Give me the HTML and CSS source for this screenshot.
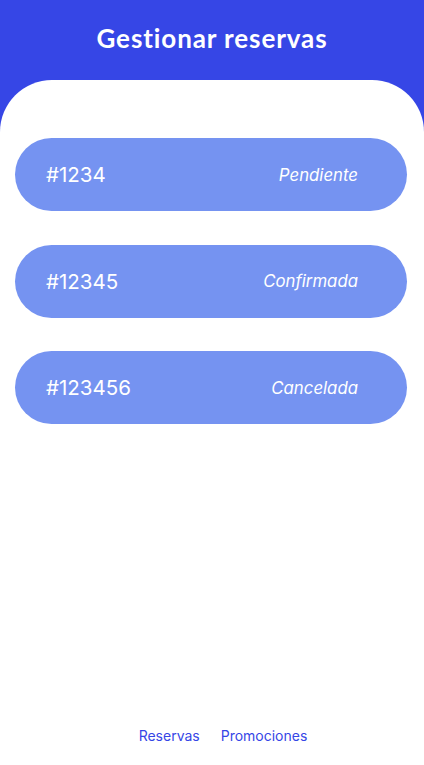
FILE: index.html
```html
<!DOCTYPE html>
<html lang="es">
<head>
<meta charset="utf-8">
<link rel="stylesheet" href="styles.css">
</head>
<body>
<div class="app">
  <header class="top">
    <h1 class="title">Gestionar reservas</h1>
  </header>
  <main class="panel">
    <div class="card"><span class="num">#1234</span><span class="status">Pendiente</span></div>
    <div class="card"><span class="num">#12345</span><span class="status">Confirmada</span></div>
    <div class="card"><span class="num">#123456</span><span class="status">Cancelada</span></div>
  </main>
  <nav class="bottom">
    <a class="tab">Reservas</a>
    <a class="tab">Promociones</a>
  </nav>
</div>
</body>
</html>
```
FILE: styles.css
```css
html, body {
  margin: 0;
  padding: 0;
  background: #ffffff;
}
.app {
  width: 424px;
  height: 765px;
  display: flex;
  flex-direction: column;
  background: #3646e6;
  overflow: hidden;
}
.top {
  height: 80px;
  display: flex;
  justify-content: center;
}
.title {
  margin: 22px 0 0;
  font-family: "Lato", "Noto Sans", sans-serif;
  font-weight: 700;
  font-size: 26px;
  line-height: 32px;
  color: #ffffff;
  letter-spacing: 0.9px;
}
.panel {
  flex: 1;
  background: #ffffff;
  border-radius: 52px 52px 0 0;
  padding: 58px 17px 0 15px;
  display: flex;
  flex-direction: column;
  gap: 33.5px;
}
.card {
  height: 73px;
  border-radius: 37px;
  background: #7593f1;
  display: flex;
  align-items: center;
  justify-content: space-between;
  padding: 0 49px 0 31px;
  color: #ffffff;
  font-family: "Inter", "Noto Sans", sans-serif;
}
.num {
  font-size: 20.5px;
  font-weight: 400;
}
.status {
  font-size: 16.8px;
  font-style: italic;
}
.bottom {
  background: #ffffff;
  height: 60px;
  display: flex;
  justify-content: center;
  gap: 21px;
  padding-left: 22px;
  font-family: "Inter", "Noto Sans", sans-serif;
  font-size: 14px;
}
.tab {
  color: #3646e6;
  margin-top: 22px;
}
```
